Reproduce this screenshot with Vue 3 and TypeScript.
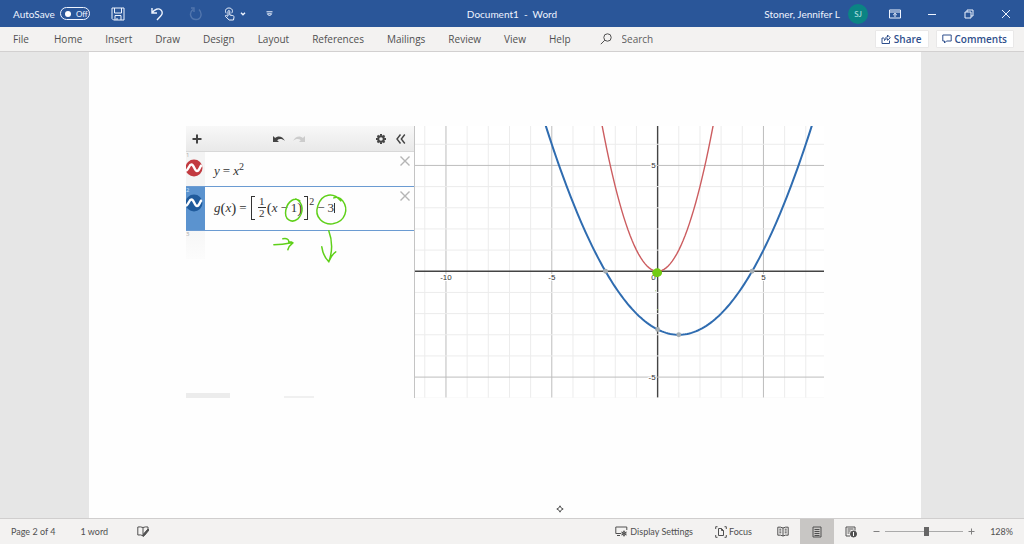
<script setup lang="ts">
import { ref } from 'vue'

const tabs: string[] = ['File', 'Home', 'Insert', 'Draw', 'Design', 'Layout', 'References', 'Mailings', 'Review', 'View', 'Help']
const autoSave = ref<boolean>(false)
const search = ref<string>('')
const zoom = ref<number>(54)

const unit = 21.2
const origin = { x: 243, y: 145.5 }
const view = { width: 410, height: 272 }

const px = (x: number): number => origin.x + x * unit
const py = (y: number): number => origin.y - y * unit

function range(from: number, to: number): number[] {
  return Array.from({ length: to - from + 1 }, (_, i) => from + i)
}

function curve(fn: (x: number) => number, from: number, to: number): string {
  const points: string[] = []
  for (let x = from; x <= to + 0.001; x += 0.1) {
    points.push(`${px(x).toFixed(2)},${py(fn(x)).toFixed(2)}`)
  }
  return points.join(' ')
}

const columns = range(-11, 7)
const rows = range(-6, 6)
const parent = curve((x) => x * x, -2.8, 2.8)
const transformed = curve((x) => ((x - 1) / 2) ** 2 - 3, -5.5, 7.5)
const keyPoints: [number, number][] = [[-2.46, 0], [4.46, 0], [0, -2.75], [1, -3]]
</script>

<template>
  <div class="app">
    <header class="titlebar">
      <div class="quick">
        <label class="autosave">
          <span>AutoSave</span>
          <span class="switch"><input v-model="autoSave" type="checkbox" role="switch" /><span>{{ autoSave ? 'On' : 'Off' }}</span></span>
        </label>
        <button class="quick-btn" aria-label="Save">
          <svg width="14" height="14" viewBox="0 0 14 14"><path d="M1 1h12v12H2.500L1 11.500zM3.500 1v5h7V1M4 13V8.500h6V13M6 11v2" /></svg>
        </button>
        <button class="quick-btn" aria-label="Undo">
          <svg width="14" height="14" viewBox="0 0 14 14"><path class="bold" d="M2 1v5h5M2 6C4.500 2 8.500 1 10.700 2.800c2.300 2 1.800 4.500 0 6.300L7 13" /></svg>
        </button>
        <button class="quick-btn faded" aria-label="Repeat" disabled>
          <svg width="14" height="14" viewBox="0 0 14 14"><path class="bold" d="M2 1h3v4M4 2.500C-.5 6 1.500 12.500 7 12.500S13.500 6 10 2.500" /></svg>
        </button>
        <button class="touch-btn" aria-label="Touch mode">
          <svg width="11" height="14" viewBox="0 0 11 14"><path d="M4 9V4.500c0-1.300 1.800-1.300 1.800 0V8l3 .6c1 .2 1.300.8 1.200 1.600L9.500 13H5.200L1.500 9.500c-.6-1 .5-1.600 1.200-1L4 9.500M2.200 6.300C.5 3.500 2 1 4.900 1s4.600 2.500 2.800 5.200" /></svg>
          <svg width="6" height="4" viewBox="0 0 6 4"><path class="bold" d="M1 .8 3 2.800 5 .8" /></svg>
        </button>
        <button class="more-btn" aria-label="Customize quick access">
          <svg width="7" height="6" viewBox="0 0 7 6"><path d="M.5.8h6M1.300 2.800h4.400L3.500 5z" /></svg>
        </button>
      </div>
      <h1 class="title">Document1&nbsp; -&nbsp; Word</h1>
      <div class="window">
        <span class="user">Stoner, Jennifer L</span>
        <button class="avatar" aria-label="Account">SJ</button>
        <button class="win-btn" aria-label="Ribbon display options">
          <svg width="12" height="10" viewBox="0 0 12 10"><path d="M.5 1h11v8H.5zM.5 3h11M6 8V4.500M4.200 6 6 4.300 7.800 6" /></svg>
        </button>
        <button class="win-btn" aria-label="Minimize">
          <svg width="10" height="10" viewBox="0 0 10 10"><path d="M1 5.500h8" /></svg>
        </button>
        <button class="win-btn" aria-label="Restore">
          <svg width="10" height="10" viewBox="0 0 10 10"><path d="M1 3h6v6H1zM3 3V1h6v6H7" /></svg>
        </button>
        <button class="win-btn" aria-label="Close">
          <svg width="10" height="10" viewBox="0 0 10 10"><path d="m1 1 8 8M9 1 1 9" /></svg>
        </button>
      </div>
    </header>

    <nav class="ribbon">
      <button v-for="tab in tabs" :key="tab" class="tab">{{ tab }}</button>
      <label class="search">
        <svg width="12" height="12" viewBox="0 0 12 12"><circle cx="7.500" cy="4.500" r="3.700" /><path d="M4.800 7.200.8 11.200" /></svg>
        <input v-model="search" type="text" placeholder="Search" aria-label="Search" />
      </label>
      <div class="actions">
        <button class="action">
          <svg width="10" height="10" viewBox="0 0 10 10"><path d="M3 4H1v5.500h7.500V6.500M3.500 6.500C3.500 4 5 3 6.500 3V1L9.300 3.800 6.500 6.300V4.700C5 4.700 4 5.500 3.500 6.500z" /></svg>
          <span>Share</span>
        </button>
        <button class="action">
          <svg width="10" height="10" viewBox="0 0 10 10"><path d="M.8 1h8.400v6H4.500L2.500 9V7H.8z" /></svg>
          <span>Comments</span>
        </button>
      </div>
    </nav>

    <main class="workspace">
      <article class="page">
        <div class="figure">
          <section class="expressions">
            <div class="exp-bar">
              <button aria-label="Add item"><svg width="10" height="10" viewBox="0 0 10 10"><path class="thick" d="M5 .5v9M.5 5h9" /></svg></button>
              <span class="history">
                <button aria-label="Undo"><svg width="12" height="8" viewBox="0 0 12 8"><path class="solid" d="M0 1v6h6L4.200 5.300C6 3.500 9 3.500 12 6 9.500 1 5 .5 2.200 3z" /></svg></button>
                <button class="dim" aria-label="Redo"><svg width="12" height="8" viewBox="0 0 12 8"><path class="solid" d="M12 1v6H6l1.800-1.700C6 3.500 3 3.500 0 6 2.500 1 7 .5 9.800 3z" /></svg></button>
              </span>
              <button aria-label="Settings"><svg width="10" height="10" viewBox="0 0 10 10"><circle class="gear" cx="5" cy="5" r="2.800" /><path class="teeth" d="M5 0v1.800M5 8.200V10M0 5h1.800M8.200 5H10M1.500 1.500l1.200 1.200M7.300 7.300l1.200 1.200M8.500 1.500 7.300 2.700M2.700 7.300 1.500 8.500" /></svg></button>
              <button class="collapse" aria-label="Hide list"><svg width="10" height="10" viewBox="0 0 10 10"><path class="bold" d="M4.500.5 1 5l3.500 4.500M8.800.5 5.300 5l3.500 4.500" /></svg></button>
            </div>

            <div class="exp-row first">
              <div class="gutter">
                <span class="index">1</span>
                <svg width="18" height="18" viewBox="0 0 18 18"><circle cx="9" cy="9" r="8.500" fill="#c23a40" /><path class="wave" d="M1 12C4 10 4 5.500 6.500 5.500S9.500 12 12 12s2.500-4.500 4.800-6" /></svg>
              </div>
              <div class="formula"><i>y</i><span class="op">=</span><i>x</i><sup>2</sup></div>
              <button class="remove" aria-label="Delete expression 1"><svg width="10" height="10" viewBox="0 0 10 10"><path class="bold" d="m.5.5 9 9M9.500.5l-9 9" /></svg></button>
            </div>

            <div class="exp-row second">
              <div class="gutter">
                <span class="index">2</span>
                <svg width="18" height="18" viewBox="0 0 18 18"><circle cx="9" cy="9" r="8.500" fill="#205b9c" /><path class="wave" d="M1 12C4 10 4 5.500 6.500 5.500S9.500 12 12 12s2.500-4.500 4.800-6" /></svg>
              </div>
              <div class="formula">
                <i>g</i><b>(</b><i>x</i><b>)</b><span class="op equals">=</span>
                <span class="bracket left"></span>
                <span class="fraction"><span>1</span><span>2</span></span>
                <b>(</b><i>x</i><span class="op">−</span><span>1</span><b>)</b>
                <span class="bracket right"></span><sup class="high">2</sup>
                <span class="op">−</span><span>3</span><span class="caret"></span>
              </div>
              <button class="remove" aria-label="Delete expression 2"><svg width="10" height="10" viewBox="0 0 10 10"><path class="bold" d="m.5.5 9 9M9.500.5l-9 9" /></svg></button>
            </div>

            <div class="exp-empty"><div class="gutter"><span class="index">3</span></div></div>
            <div class="exp-foot"><span class="keypad"></span><span class="brand"></span></div>

            <svg class="ink" viewBox="0 0 228 272" aria-hidden="true">
              <path d="M114 75C109 71 102 75 100 84C98 94 106 98 112 93C118 87 118 77 110 73" />
              <path d="M155 75C148 66 136 67 132 80C128 92 138 99 147 98C160 96 163 83 157 75C154 71 150 71 148 72" />
              <path d="M88 119Q96 119 106 117M97 113Q103 112 103 116Q106 116 107 117Q103 120 102 124" />
              <path d="M143 105C147 116 146 128 143 136M136 121C137 128 139 132 143 136C145 131 147 128 150 126" />
            </svg>
          </section>

          <svg class="graph" :viewBox="`0 0 ${view.width} ${view.height}`" role="img" aria-label="Graph of two parabolas">
            <g v-for="c in columns" :key="`c${c}`">
              <line :x1="px(c)" :x2="px(c)" y1="0" :y2="view.height" :class="c === 0 ? 'axis' : c % 5 === 0 ? 'major' : 'minor'" />
            </g>
            <g v-for="r in rows" :key="`r${r}`">
              <line x1="0" :x2="view.width" :y1="py(r)" :y2="py(r)" :class="r === 0 ? 'axis' : r % 5 === 0 ? 'major' : 'minor'" />
            </g>
            <polyline class="curve red" :points="parent" />
            <polyline class="curve blue" :points="transformed" />
            <circle v-for="([x, y], i) in keyPoints" :key="i" :cx="px(x)" :cy="py(y)" r="2.400" class="key" />
            <text :x="px(-10)" :y="py(0) + 9" text-anchor="middle">-10</text>
            <text :x="px(-5)" :y="py(0) + 9" text-anchor="middle">-5</text>
            <text :x="px(5)" :y="py(0) + 9" text-anchor="middle">5</text>
            <text :x="px(0) - 2" :y="py(0) + 9" text-anchor="end">0</text>
            <text :x="px(0) - 2" :y="py(5) + 3" text-anchor="end">5</text>
            <text :x="px(0) - 2" :y="py(-5) + 3" text-anchor="end">-5</text>
            <path class="blob" d="M239 144q4-3 7 0q3 3 0 6q-4 3-7 0q-3-3 0-6z" />
            <circle cx="241" cy="165" r=".6" class="speck" />
            <circle cx="243" cy="184" r=".6" class="speck" />
          </svg>
        </div>
        <svg class="pen" width="8" height="8" viewBox="0 0 8 8" aria-hidden="true"><path d="M4 .8Q4.600 3.400 7.200 4Q4.600 4.600 4 7.200Q3.400 4.600.8 4Q3.400 3.400 4 .8z" /></svg>
      </article>
    </main>

    <footer class="status">
      <button>Page 2 of 4</button>
      <button class="words">1 word</button>
      <button class="proof" aria-label="Proofing">
        <svg width="12" height="11" viewBox="0 0 12 11"><path d="M6 1.500v8M6 1.500Q3.500.5.800 1v8q3-.5 5.200.7M6 1.500Q8.500.5 11 1v2" /><path class="fill" d="m11 3 1 1-4.500 5.500L6 10.500 6.500 8z" /></svg>
      </button>
      <div class="status-right">
        <button class="display">
          <svg width="13" height="11" viewBox="0 0 13 11"><path d="M6 7.500H.8V1h11v3M2 9.500h3" /><circle cx="9" cy="7.500" r="1.800" /><path d="M9 4.500v6M6.300 6l5.400 3M6.300 9l5.400-3" /></svg>
          <span>Display Settings</span>
        </button>
        <button class="focus">
          <svg width="12" height="12" viewBox="0 0 12 12"><path d="M3.500 2.500h3l2 2v5h-5zM6.500 2.500v2h2M.7 3V.7H2.500M9.500.7h1.800V3M.7 9v2.300h1.800M11.300 9v2.300H9.500" /></svg>
          <span>Focus</span>
        </button>
        <button class="mode" aria-label="Read mode">
          <svg width="12" height="11" viewBox="0 0 12 11"><path d="M6 2v8M6 2Q3.500.7.800 1.200v8Q3.500 8.700 6 10Q8.500 8.700 11.200 9.200v-8Q8.500.7 6 2M2.300 3.200h2M2.300 5h2M2.300 6.800h2M7.700 3.200h2M7.700 5h2M7.700 6.800h2" /></svg>
        </button>
        <button class="mode active" aria-label="Print layout">
          <svg width="10" height="12" viewBox="0 0 10 12"><path d="M1 1h8v10H1zM2.500 3.500h5M2.500 5.500h5M2.500 7.500h5M2.500 9.500h5" /></svg>
        </button>
        <button class="mode" aria-label="Web layout">
          <svg width="12" height="12" viewBox="0 0 12 12"><path d="M5 10H1V1h9v3.500M2.500 3h6M2.500 5h3M2.500 7h2" /><circle class="fill" cx="8.500" cy="8" r="3" /><path class="light" d="M8.500 6v4" /></svg>
        </button>
        <button class="step" aria-label="Zoom out"><svg width="7" height="7" viewBox="0 0 7 7"><path d="M.5 3.500h6" /></svg></button>
        <input v-model.number="zoom" class="zoom" type="range" min="0" max="100" aria-label="Zoom" />
        <button class="step" aria-label="Zoom in"><svg width="7" height="7" viewBox="0 0 7 7"><path d="M.5 3.500h6M3.500.5v6" /></svg></button>
        <button class="percent">128%</button>
      </div>
    </footer>
  </div>
</template>

<style>
body {
  margin: 0;
}
</style>

<style scoped>
.app {
  display: flex;
  flex-direction: column;
  min-height: 100vh;
  font-family: "Open Sans", "Noto Sans", sans-serif;
  font-size: 10px;
  color: #505050;
}
* {
  box-sizing: border-box;
}
button {
  display: flex;
  align-items: center;
  justify-content: center;
  margin: 0;
  padding: 0;
  border: 0;
  background: none;
  color: inherit;
  font: inherit;
  white-space: nowrap;
}
svg {
  display: block;
  flex: none;
  fill: none;
  stroke: currentColor;
}
.bold {
  stroke-width: 1.4;
}
.titlebar {
  display: grid;
  grid-template-columns: 1fr auto 1fr;
  align-items: center;
  height: 27px;
  background: #2a5699;
  color: #eef4ff;
  font-family: Lato, "Open Sans", sans-serif;
}
.quick,
.window {
  display: flex;
  align-items: center;
}
.quick {
  padding-left: 13px;
}
.autosave {
  display: flex;
  align-items: center;
  justify-content: space-between;
  width: 77px;
  margin-right: 8px;
}
.switch {
  display: flex;
  align-items: center;
  gap: 5px;
  width: 30px;
  height: 13px;
  padding: 0 4px;
  border: 1px solid #eef4ff;
  border-radius: 7px;
  font-size: 8px;
}
.switch input {
  flex: none;
  appearance: none;
  width: 6px;
  height: 6px;
  margin: 0;
  border-radius: 50%;
  background: #fff;
}
.quick-btn {
  width: 39px;
  height: 27px;
}
.faded {
  opacity: 0.2;
}
.touch-btn {
  gap: 5px;
  width: 40px;
  height: 27px;
}
.more-btn {
  width: 28px;
  height: 27px;
}
.title {
  margin: 0;
  font-size: 10px;
  font-weight: 400;
}
.window {
  justify-content: flex-end;
}
.user {
  margin-right: 8px;
  white-space: nowrap;
}
.avatar {
  width: 20px;
  height: 20px;
  margin-right: 8px;
  border-radius: 50%;
  background: #0b8484;
  color: #bfe6e6;
  font-size: 8px;
}
.win-btn {
  width: 37px;
  height: 27px;
}
.ribbon {
  display: flex;
  align-items: center;
  gap: 23px;
  height: 25px;
  padding: 0 10px 0 13px;
  border-bottom: 1px solid #d2d0d0;
  background: #f3f2f1;
}
.tab {
  justify-content: flex-start;
  min-width: 18px;
}
.search {
  display: flex;
  flex: 1;
  align-items: center;
  gap: 10px;
  min-width: 0;
  margin-left: 6px;
}
.search input {
  width: 100%;
  min-width: 0;
  padding: 0;
  border: 0;
  outline: 0;
  background: none;
  color: inherit;
  font: inherit;
}
.search input::placeholder {
  color: #606060;
  opacity: 1;
}
.actions {
  display: flex;
  gap: 7px;
}
.action {
  gap: 3px;
  height: 18px;
  padding: 0 6px 0 5px;
  border: 1px solid #e9e8e8;
  border-radius: 1px;
  background: #fff;
  color: #2f4f8c;
  font-weight: 600;
}
.workspace {
  display: flex;
  flex: 1;
  justify-content: center;
  padding-right: 14px;
  background: #e6e6e6;
}
.page {
  display: flex;
  flex: 1;
  flex-direction: column;
  justify-content: space-between;
  max-width: 832px;
  padding: 74px 97px 5px;
  background: #fefefe;
}
.figure {
  display: flex;
  align-items: flex-start;
}
.expressions {
  position: relative;
  display: flex;
  flex: 228;
  flex-direction: column;
  aspect-ratio: 228 / 272;
  color: #444;
}
.exp-bar {
  display: flex;
  align-items: center;
  height: 26px;
  padding: 0 8px 0 6px;
  border-bottom: 1px solid #d8d8d8;
  background: linear-gradient(#f8f8f8, #e9e9e9);
}
.thick {
  stroke-width: 2;
}
.solid {
  fill: currentColor;
  stroke: none;
}
.history {
  display: flex;
  flex: 1;
  gap: 8px;
  padding-left: 71px;
}
.dim {
  color: #ccc;
}
.gear {
  stroke-width: 2;
}
.teeth {
  stroke-width: 2;
}
.collapse {
  margin-left: 10px;
}
.exp-row {
  display: flex;
}
.gutter {
  flex: none;
  width: 19px;
  overflow: hidden;
  background: #f4f4f4;
}
.gutter svg {
  margin-left: -1px;
  stroke: none;
}
.gutter .wave {
  stroke: #fff;
  stroke-width: 2.4;
}
.index {
  display: block;
  height: 7px;
  font-size: 6px;
  line-height: 7px;
  color: #aaa;
}
.first {
  height: 34px;
}
.second {
  height: 45px;
  border: solid #6b9bd2;
  border-width: 1px 0;
}
.second .gutter {
  background: #5b93cf;
}
.second .index {
  color: #cfe2f7;
}
.formula {
  display: flex;
  flex: 1;
  align-items: center;
  padding-left: 9px;
  font-family: "Liberation Serif", serif;
  font-size: 13px;
  line-height: 16px;
  color: #333;
}
.first .formula {
  padding-top: 4px;
}
.second .formula {
  padding-bottom: 2px;
}
.formula b {
  font-size: 15px;
  font-weight: 400;
}
.op {
  padding: 0 3px;
}
.equals {
  padding-right: 4px;
}
sup {
  align-self: center;
  padding-bottom: 8px;
  font-size: 10px;
  line-height: 10px;
}
.high {
  padding-bottom: 12px;
}
.bracket {
  width: 4px;
  height: 24px;
  border: 1px solid #333;
}
.left {
  margin-right: 3px;
  border-right: 0;
}
.right {
  margin: 0 1px 0 2px;
  border-left: 0;
}
.fraction {
  display: flex;
  flex-direction: column;
  align-items: center;
  width: 8px;
  margin-right: 1px;
  font-size: 11px;
  line-height: 11px;
}
.fraction span + span {
  width: 100%;
  border-top: 1px solid #333;
  text-align: center;
}
.caret {
  width: 1px;
  height: 10px;
  background: #333;
}
.remove {
  align-self: flex-start;
  margin: 4px 4px 0 0;
  color: #b5b5b5;
}
.exp-empty {
  display: flex;
  flex: 1;
}
.exp-empty .gutter {
  height: 28px;
  background: linear-gradient(#f7f7f7, #fcfcfc);
}
.exp-foot {
  display: flex;
  align-items: flex-end;
  gap: 54px;
}
.keypad {
  width: 44px;
  height: 5px;
  background: #ececec;
}
.brand {
  width: 30px;
  height: 2px;
  background: #f0f0f0;
}
.ink {
  position: absolute;
  inset: 0;
  width: 100%;
  height: 100%;
  stroke: #5fd019;
  stroke-width: 1.5;
  stroke-linecap: round;
}
.graph {
  flex: 410;
  min-width: 0;
  border-left: 1px solid #c4c4c4;
  background: #fff;
}
.minor {
  stroke: #ececec;
}
.major {
  stroke: #bdbdbd;
}
.axis {
  stroke: #444;
  stroke-width: 1.4;
}
.curve.red {
  stroke: #cc5d60;
  stroke-width: 1.4;
}
.curve.blue {
  stroke: #2f6cb0;
  stroke-width: 2;
}
.key {
  fill: #a3acb2;
  stroke: none;
}
.graph text {
  font-family: "Liberation Sans", Arial, sans-serif;
  font-size: 8px;
  fill: #333;
  stroke: #fff;
  stroke-width: 2;
  paint-order: stroke;
}
.blob {
  fill: #72cc12;
  stroke: none;
}
.speck {
  fill: #9ac46a;
  stroke: none;
}
.pen {
  align-self: center;
  margin-left: 110px;
}
.status {
  display: flex;
  align-items: stretch;
  height: 26px;
  padding: 0 11px;
  border-top: 1px solid #d0cece;
  background: #f3f2f1;
  font-family: Lato, "Open Sans", sans-serif;
  font-size: 9px;
}
.words {
  margin-left: 25px;
}
.proof {
  margin-left: 29px;
}
.status-right {
  display: flex;
  margin-left: auto;
}
.display,
.focus {
  gap: 2px;
}
.focus {
  margin: 0 14px 0 22px;
}
.mode {
  width: 34px;
}
.active {
  background: #c8c6c4;
}
.fill {
  fill: currentColor;
}
.light {
  stroke: #fff;
}
.step {
  margin: 0 5px;
  color: #808080;
}
.zoom {
  appearance: none;
  width: 78px;
  margin: 0;
  background: linear-gradient(#aaa, #aaa) center / 100% 1px no-repeat;
}
.zoom::-webkit-slider-thumb {
  appearance: none;
  width: 5px;
  height: 9px;
  background: #666;
}
.percent {
  justify-content: flex-end;
  width: 33px;
}
</style>
